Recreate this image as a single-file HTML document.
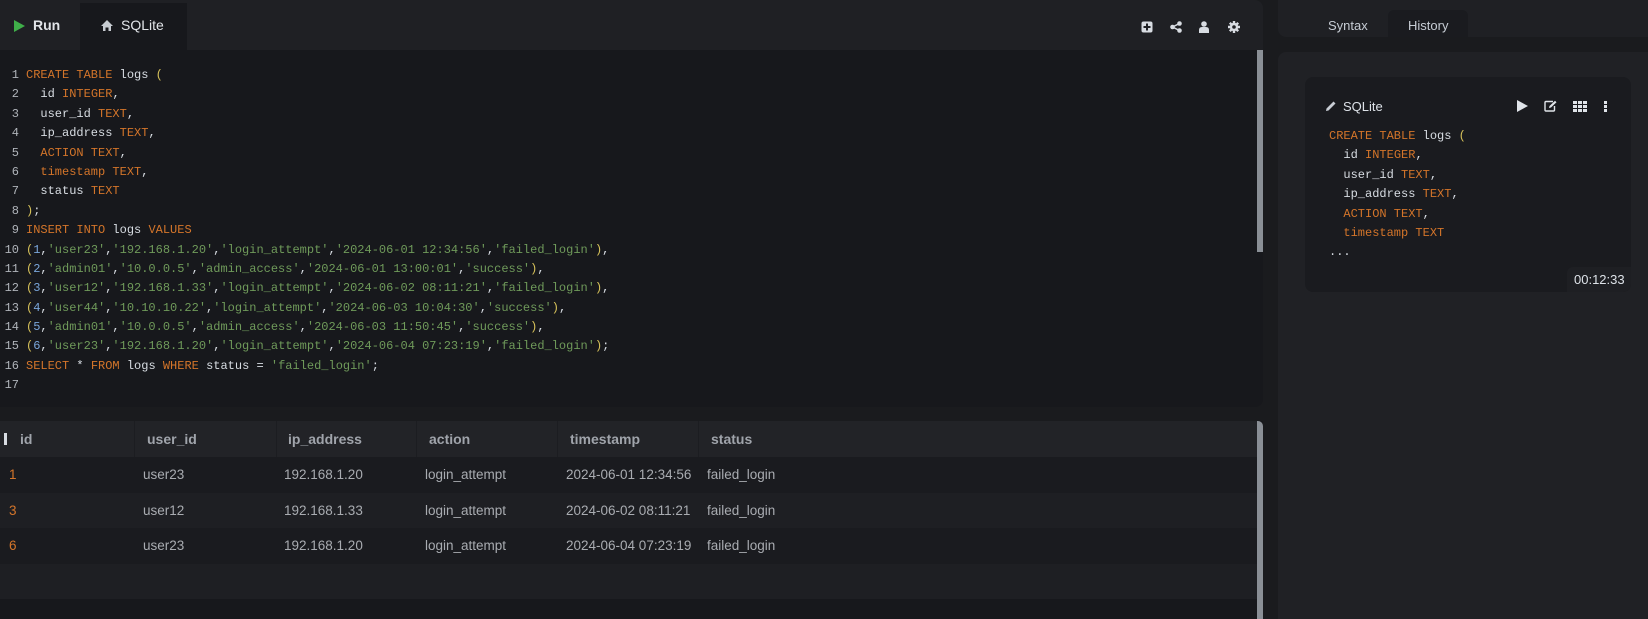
<!DOCTYPE html>
<html><head><meta charset="utf-8"><style>
*{margin:0;padding:0;box-sizing:border-box}
body{width:1648px;height:619px;background:#1a1b1e;position:relative;overflow:hidden;font-family:"Liberation Sans",Arial,sans-serif}
.abs{position:absolute}
.mono{font-family:"Liberation Mono","DejaVu Sans Mono",monospace;font-size:12px}
.mono div{white-space:pre}
.k{color:#d4752a}.s{color:#6f9a5a}.n{color:#7aa6da}.p{color:#d7c25a}.t{color:#d8dde3}
.ln{color:#b0b4ba;display:inline-block;width:19px;text-align:right;margin-right:7px}
.code div{height:19.4px;line-height:19.4px}
.th{position:absolute;top:0;height:36px;line-height:36px;font-weight:bold;font-size:14px;color:#a0a4ab}
.row{position:absolute;left:0;width:1257px;height:35.5px;font-size:13.5px;color:#a9acb1}
.row span{position:absolute;line-height:35.5px}
</style></head><body>
<div class="abs" style="left:0;top:0;width:1263px;height:50px;background:#1f2024;border-radius:0 8px 0 0"></div>
<div class="abs" style="left:80px;top:3px;width:107px;height:47px;background:#17181c"></div>
<svg class="abs" style="left:14px;top:20px" width="11" height="12"><path d="M0 0L11 6L0 12Z" fill="#3fae49"/></svg>
<div class="abs" style="left:33px;top:17px;font-size:14px;font-weight:bold;color:#e2e5e9">Run</div>
<svg class="abs" style="left:101px;top:20px" width="12" height="11"><path d="M6 0L12 6H10V11H7.5V7.5H4.5V11H2V6H0Z" fill="#c8ccd2"/></svg>
<div class="abs" style="left:121px;top:17px;font-size:14px;color:#e2e5e9">SQLite</div>
<svg class="abs" style="left:1141px;top:21px" width="12" height="12"><rect x="0.5" y="0.5" width="11" height="11" rx="2" fill="#d8dce2"/><path d="M6 2.5V9.5M2.5 6H9.5" stroke="#1f2024" stroke-width="2"/></svg>
<svg class="abs" style="left:1170px;top:21px" width="12" height="12"><circle cx="9.5" cy="2.5" r="2.3" fill="#d8dce2"/><circle cx="2.5" cy="6" r="2.3" fill="#d8dce2"/><circle cx="9.5" cy="9.5" r="2.3" fill="#d8dce2"/><path d="M9.5 2.5L2.5 6L9.5 9.5" stroke="#d8dce2" stroke-width="1.5" fill="none"/></svg>
<svg class="abs" style="left:1199px;top:21px" width="10" height="12"><circle cx="5" cy="3" r="2.8" fill="#d8dce2"/><path d="M0 12V9Q0 6 3 6H7Q10 6 10 9V12Z" fill="#d8dce2"/></svg>
<svg class="abs" style="left:1228px;top:21px" width="12" height="12"><circle cx="6" cy="6" r="4.2" fill="#d8dce2"/><path d="M6 0V12M0 6H12M1.8 1.8L10.2 10.2M10.2 1.8L1.8 10.2" stroke="#d8dce2" stroke-width="2.4"/><circle cx="6" cy="6" r="1.8" fill="#1f2024"/></svg>
<div class="abs" style="left:0;top:50px;width:1263px;height:357px;background:#17181c;border-radius:0 0 8px 0"></div>
<div class="abs" style="left:1257px;top:50px;width:6px;height:202px;background:#8a8f96"></div>
<div class="abs mono code" style="left:0;top:66px"><div><span class="ln">1</span><span class="k">CREATE TABLE</span> <span class="t">logs</span> <span class="p">(</span></div><div><span class="ln">2</span><span class="t">  id </span><span class="k">INTEGER</span><span class="t">,</span></div><div><span class="ln">3</span><span class="t">  user_id </span><span class="k">TEXT</span><span class="t">,</span></div><div><span class="ln">4</span><span class="t">  ip_address </span><span class="k">TEXT</span><span class="t">,</span></div><div><span class="ln">5</span><span class="k">  ACTION TEXT</span><span class="t">,</span></div><div><span class="ln">6</span><span class="k">  timestamp TEXT</span><span class="t">,</span></div><div><span class="ln">7</span><span class="t">  status </span><span class="k">TEXT</span></div><div><span class="ln">8</span><span class="p">)</span><span class="t">;</span></div><div><span class="ln">9</span><span class="k">INSERT INTO</span> <span class="t">logs</span> <span class="k">VALUES</span></div><div><span class="ln">10</span><span class="p">(</span><span class="n">1</span><span class="t">,</span><span class="s">'user23'</span><span class="t">,</span><span class="s">'192.168.1.20'</span><span class="t">,</span><span class="s">'login_attempt'</span><span class="t">,</span><span class="s">'2024-06-01 12:34:56'</span><span class="t">,</span><span class="s">'failed_login'</span><span class="p">)</span><span class="t">,</span></div><div><span class="ln">11</span><span class="p">(</span><span class="n">2</span><span class="t">,</span><span class="s">'admin01'</span><span class="t">,</span><span class="s">'10.0.0.5'</span><span class="t">,</span><span class="s">'admin_access'</span><span class="t">,</span><span class="s">'2024-06-01 13:00:01'</span><span class="t">,</span><span class="s">'success'</span><span class="p">)</span><span class="t">,</span></div><div><span class="ln">12</span><span class="p">(</span><span class="n">3</span><span class="t">,</span><span class="s">'user12'</span><span class="t">,</span><span class="s">'192.168.1.33'</span><span class="t">,</span><span class="s">'login_attempt'</span><span class="t">,</span><span class="s">'2024-06-02 08:11:21'</span><span class="t">,</span><span class="s">'failed_login'</span><span class="p">)</span><span class="t">,</span></div><div><span class="ln">13</span><span class="p">(</span><span class="n">4</span><span class="t">,</span><span class="s">'user44'</span><span class="t">,</span><span class="s">'10.10.10.22'</span><span class="t">,</span><span class="s">'login_attempt'</span><span class="t">,</span><span class="s">'2024-06-03 10:04:30'</span><span class="t">,</span><span class="s">'success'</span><span class="p">)</span><span class="t">,</span></div><div><span class="ln">14</span><span class="p">(</span><span class="n">5</span><span class="t">,</span><span class="s">'admin01'</span><span class="t">,</span><span class="s">'10.0.0.5'</span><span class="t">,</span><span class="s">'admin_access'</span><span class="t">,</span><span class="s">'2024-06-03 11:50:45'</span><span class="t">,</span><span class="s">'success'</span><span class="p">)</span><span class="t">,</span></div><div><span class="ln">15</span><span class="p">(</span><span class="n">6</span><span class="t">,</span><span class="s">'user23'</span><span class="t">,</span><span class="s">'192.168.1.20'</span><span class="t">,</span><span class="s">'login_attempt'</span><span class="t">,</span><span class="s">'2024-06-04 07:23:19'</span><span class="t">,</span><span class="s">'failed_login'</span><span class="p">)</span><span class="t">;</span></div><div><span class="ln">16</span><span class="k">SELECT</span><span class="t"> * </span><span class="k">FROM</span><span class="t"> logs </span><span class="k">WHERE</span><span class="t"> status = </span><span class="s">'failed_login'</span><span class="t">;</span></div><div><span class="ln">17</span></div></div>
<div class="abs" style="left:0;top:421px;width:1263px;height:198px;background:#17181c"></div>
<div class="abs" style="left:0;top:421px;width:1257px;height:36px;background:#222327">
<div class="abs" style="left:4px;top:12px;width:3px;height:12px;background:#d8dce2"></div>
<div class="abs" style="left:134px;top:0;width:1px;height:36px;background:#1c1d21"></div>
<div class="abs" style="left:276px;top:0;width:1px;height:36px;background:#1c1d21"></div>
<div class="abs" style="left:416px;top:0;width:1px;height:36px;background:#1c1d21"></div>
<div class="abs" style="left:557px;top:0;width:1px;height:36px;background:#1c1d21"></div>
<div class="abs" style="left:698px;top:0;width:1px;height:36px;background:#1c1d21"></div>
<span class="th" style="left:20px">id</span><span class="th" style="left:147px">user_id</span><span class="th" style="left:288px">ip_address</span><span class="th" style="left:429px">action</span><span class="th" style="left:570px">timestamp</span><span class="th" style="left:711px">status</span>
</div>
<div class="abs" style="left:1257px;top:421px;width:6px;height:198px;background:#8a8f96;border-radius:0 5px 0 0"></div>
<div class="row" style="top:457px;background:#1a1b1f"><span class="k" style="left:9px">1</span><span style="left:143px">user23</span><span style="left:284px">192.168.1.20</span><span style="left:425px">login_attempt</span><span style="left:566px">2024-06-01 12:34:56</span><span style="left:707px">failed_login</span></div>
<div class="row" style="top:492.5px;background:#1e1f23"><span class="k" style="left:9px">3</span><span style="left:143px">user12</span><span style="left:284px">192.168.1.33</span><span style="left:425px">login_attempt</span><span style="left:566px">2024-06-02 08:11:21</span><span style="left:707px">failed_login</span></div>
<div class="row" style="top:528px;background:#1a1b1f"><span class="k" style="left:9px">6</span><span style="left:143px">user23</span><span style="left:284px">192.168.1.20</span><span style="left:425px">login_attempt</span><span style="left:566px">2024-06-04 07:23:19</span><span style="left:707px">failed_login</span></div>
<div class="row" style="top:563.5px;background:#1e1f23"></div>
<div class="abs" style="left:1278px;top:0;width:370px;height:37px;background:#1f2024;border-radius:0 0 0 8px"></div>
<div class="abs" style="left:1388px;top:10px;width:80px;height:27px;background:#1a1b1f;border-radius:6px 6px 0 0"></div>
<div class="abs" style="left:1328px;top:18px;font-size:13px;color:#c6ccd4">Syntax</div>
<div class="abs" style="left:1408px;top:18px;font-size:13px;color:#c6ccd4">History</div>
<div class="abs" style="left:1278px;top:52px;width:370px;height:567px;background:#202125;border-radius:8px 0 0 0"></div>
<div class="abs" style="left:1305px;top:77px;width:326px;height:215px;background:#1a1b1f;border-radius:8px"></div>
<svg class="abs" style="left:1325px;top:100px" width="12" height="12"><path d="M1 11L1.5 8.5L8.5 1.5L10.5 3.5L3.5 10.5Z" fill="#c9ced5"/></svg>
<div class="abs" style="left:1343px;top:99px;font-size:13px;color:#dde2e8">SQLite</div>
<svg class="abs" style="left:1517px;top:100px" width="11" height="12"><path d="M0 0L11 6L0 12Z" fill="#e0e4e9"/></svg>
<svg class="abs" style="left:1544px;top:100px" width="13" height="12"><path d="M9 1.5H2Q1 1.5 1 2.5V10Q1 11 2 11H9.5Q10.5 11 10.5 10V6" stroke="#e0e4e9" stroke-width="1.4" fill="none"/><path d="M5 8L5.5 6L11 0.8L12.5 2.3L7 7.5Z" fill="#e0e4e9"/></svg>
<svg class="abs" style="left:1573px;top:101px" width="14" height="11"><g fill="#e0e4e9"><rect x="0" y="0" width="4" height="3"/><rect x="5" y="0" width="4" height="3"/><rect x="10" y="0" width="4" height="3"/><rect x="0" y="4" width="4" height="3"/><rect x="5" y="4" width="4" height="3"/><rect x="10" y="4" width="4" height="3"/><rect x="0" y="8" width="4" height="3"/><rect x="5" y="8" width="4" height="3"/><rect x="10" y="8" width="4" height="3"/></g></svg>
<div class="abs" style="left:1604px;top:101px;width:3px;height:11px;background:linear-gradient(#e0e4e9 0 3px,transparent 3px 4px,#e0e4e9 4px 7px,transparent 7px 8px,#e0e4e9 8px)"></div>
<div class="abs mono code" style="left:1329px;top:127px"><div><span class="k">CREATE TABLE</span> <span class="t">logs</span> <span class="p">(</span></div><div><span class="t">  id </span><span class="k">INTEGER</span><span class="t">,</span></div><div><span class="t">  user_id </span><span class="k">TEXT</span><span class="t">,</span></div><div><span class="t">  ip_address </span><span class="k">TEXT</span><span class="t">,</span></div><div><span class="k">  ACTION TEXT</span><span class="t">,</span></div><div><span class="k">  timestamp TEXT</span></div><div><span class="t">...</span></div></div>
<div class="abs" style="left:1567px;top:267px;width:64px;height:25px;background:#1e1f23;border-radius:6px 0 8px 0"></div>
<div class="abs" style="left:1574px;top:272px;font-size:13px;color:#dde2e8">00:12:33</div>
</body></html>
